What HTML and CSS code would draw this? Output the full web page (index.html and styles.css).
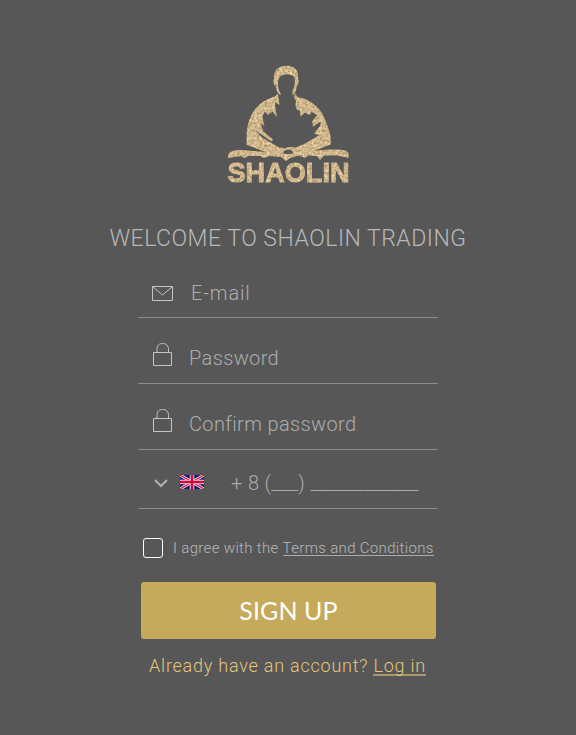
FILE: index.html
```html
<!DOCTYPE html>
<html lang="en">
<head>
<meta charset="utf-8">
<title>Shaolin Trading</title>
<link rel="stylesheet" href="styles.css">
</head>
<body>
<main class="signup">
  <svg class="logo" viewBox="220 60 136 128" role="img" aria-label="Shaolin">
    <defs>
      <filter id="gold" x="0" y="0" width="100%" height="100%" color-interpolation-filters="sRGB">
        <feTurbulence type="fractalNoise" baseFrequency=".4" numOctaves="3" seed="4" result="n"/>
        <feColorMatrix in="n" values=".45 0 0 0 .59  .45 0 0 0 .49  .45 0 0 0 .32  0 0 0 0 1" result="c"/>
        <feComposite in="c" in2="SourceAlpha" operator="in"/>
      </filter>
    </defs>
    <g filter="url(#gold)" fill="#d4b780">
      <path d="M281 95C278 94 276.500 91 275.500 86C273.500 85 272.800 81 274 79C273 70 279 65.700 286.500 65.700C294 65.700 299 70 298 78.500C299.500 81 298.500 84 296.800 86C296 91 295 94 292.700 95L292.300 91.500C294.800 87 295.800 80 294 76.500C291 73.500 283 74 280.500 76C277.500 79 277 86 279.700 91.500Z"/>
      <path d="M278 93L279.500 105L275 102L275.500 109L277 117L272.500 111.500L268 115L265 111.500L262.300 116.500L264.500 126L260.500 123.500L263.300 131.500L273 139.500L272 141.500L267 138.500L254 129L262 137.500L279 147.500L285 148C289 146.500 293 147 296 147.500L305 143.500L319.500 135L314 133.500L320 126L321 121.500L313 126.500L312 121.500L317 115L311.500 111.500L310 115L305 112.500L300.500 116.500L299.500 110L297 110L295.500 105L296 101L294 97L295 93L298 97.500C304 97 315 104 319 109C322 112 325 119 327.500 126C331 134 331 140 330.700 144.500L315 150.500L330 149.500C341 149 347 150 348.500 153L348.500 158L338 155.500L324 155.500L320 160L317 156L308 155.500L305 158L299 155.500L290 158L286 161L281 157L270 156L264 158L260 156L249 156L244 158L241 156L228 158C227.500 152 232 150 242 150L266 152L246.700 145C246 133 247 124 251 116C255 107 262 101 272 97.500C275 97 277 95 278 93ZM284 151C282 153 284 154.500 288 154L293 153.500C293.500 151 291 149.500 288 149.500Z"/>
      <text class="wordmark" x="227.500" y="181.500" textLength="122" lengthAdjust="spacingAndGlyphs">SHAOLIN</text>
    </g>
  </svg>
  <h1>WELCOME TO SHAOLIN TRADING</h1>
  <form>
    <label class="field email"><svg class="mail" viewBox="0 0 22 16"><path d="M.5.500H20.500V14.500H.500ZM.500.500L10.500 9L20.500.500"/></svg><span>E-mail</span></label>
    <label class="field password"><svg class="lock" viewBox="0 0 20 24"><path d="M.500 9.500H18.500V22.500H.500ZM4 9.500V6.500C4 2.500 6 .500 9.500 .500S15.500 2.500 15.500 6.500V9.500"/></svg><span>Password</span></label>
    <label class="field confirm"><svg class="lock" viewBox="0 0 20 24"><path d="M.500 9.500H18.500V22.500H.500ZM4 9.500V6.500C4 2.500 6 .500 9.500 .500S15.500 2.500 15.500 6.500V9.500"/></svg><span>Confirm password</span></label>
    <div class="field phone">
      <svg class="chevron" viewBox="0 0 14 9"><path d="M1 1L7 7L13 1"/></svg>
      <svg class="flag" viewBox="0 0 24 14"><path fill="#17177c" d="M0 0H24V14H0Z"/><path d="M0 0L24 14M24 0L0 14" stroke="#ddd" stroke-width="3"/><path d="M0 0L24 14M24 0L0 14" stroke="#e21343" stroke-width="1.200"/><path d="M12 0V14M0 7H24" stroke="#ddd" stroke-width="4.500"/><path d="M12 0V14M0 7H24" stroke="#df0036" stroke-width="2.500"/></svg>
      <span>+ 8 (___) ____________</span>
    </div>
    <div class="agree"><span class="box"></span><span class="copy">I agree with the <a>Terms and Conditions</a></span></div>
    <button type="button">SIGN UP</button>
  </form>
  <p class="login">Already have an account? <a>Log in</a></p>
</main>
</body>
</html>
```
FILE: styles.css
```css
* { box-sizing: border-box; }
body { margin: 0; background: #575757; color: #acacac; font-family: Roboto, sans-serif; font-weight: 300; }
.signup { height: 735px; padding-top: 60px; display: flex; flex-direction: column; align-items: center; white-space: nowrap; }
.logo { width: 136px; height: 128px; }
.wordmark { font: 700 28px "Liberation Sans", sans-serif; stroke: #d4b780; stroke-width: 1px; }
h1 { margin: 37px 0 0; font-size: 23px; line-height: 28px; font-weight: 300; letter-spacing: .5px; color: #b8b8b8; }
form { width: 300px; margin-top: -1px; }
svg { display: block; fill: none; flex: none; }
.field { display: flex; height: 66px; padding-left: 14px; border-bottom: 1px solid #8b8b8b; font-size: 20px; line-height: 24px; letter-spacing: .36px; }
.mail, .lock { stroke: #c4c4c4; stroke-width: 1; }
.email { padding-top: 29px; letter-spacing: .85px; }
.mail { width: 22px; height: 16px; margin: 5px 17px 0 0; }
.lock { width: 20px; height: 24px; margin: 0 16px 0 1px; }
.password, .confirm { padding-top: 25px; }
.password span, .confirm span { margin-top: 3px; }
.phone { height: 59px; padding: 21px 0 0 16px; }
.chevron { width: 14px; height: 9px; margin: 8px 12px 0 0; stroke: #b0b0b0; stroke-width: 2; }
.flag { width: 24px; height: 14px; margin: 4px 27px 0 0; }
.agree { display: flex; margin: 29px 0 0 5px; height: 20px; }
.box { width: 20px; height: 20px; border: 1px solid #fff; border-radius: 3px; margin-right: 10px; }
.copy { font-size: 15px; line-height: 20px; letter-spacing: .33px; color: #b8b8b8; }
.copy a { display: inline-block; height: 18px; border-bottom: 1px solid #aaa; }
button { display: block; width: 295px; height: 57px; margin: 24px 0 0 3px; padding: 0 0 2px; border: 0; border-radius: 3px; background: #c6aa5b; color: #fff; font: 400 25px/54px Lato, sans-serif; letter-spacing: .1px; }
.login { margin: 16px 2px 0 0; font-size: 18px; line-height: 22px; letter-spacing: .77px; color: #e3c57c; }
.login a { display: inline-block; height: 21px; border-bottom: 2px solid #a99664; margin-right: -1px; }
```
